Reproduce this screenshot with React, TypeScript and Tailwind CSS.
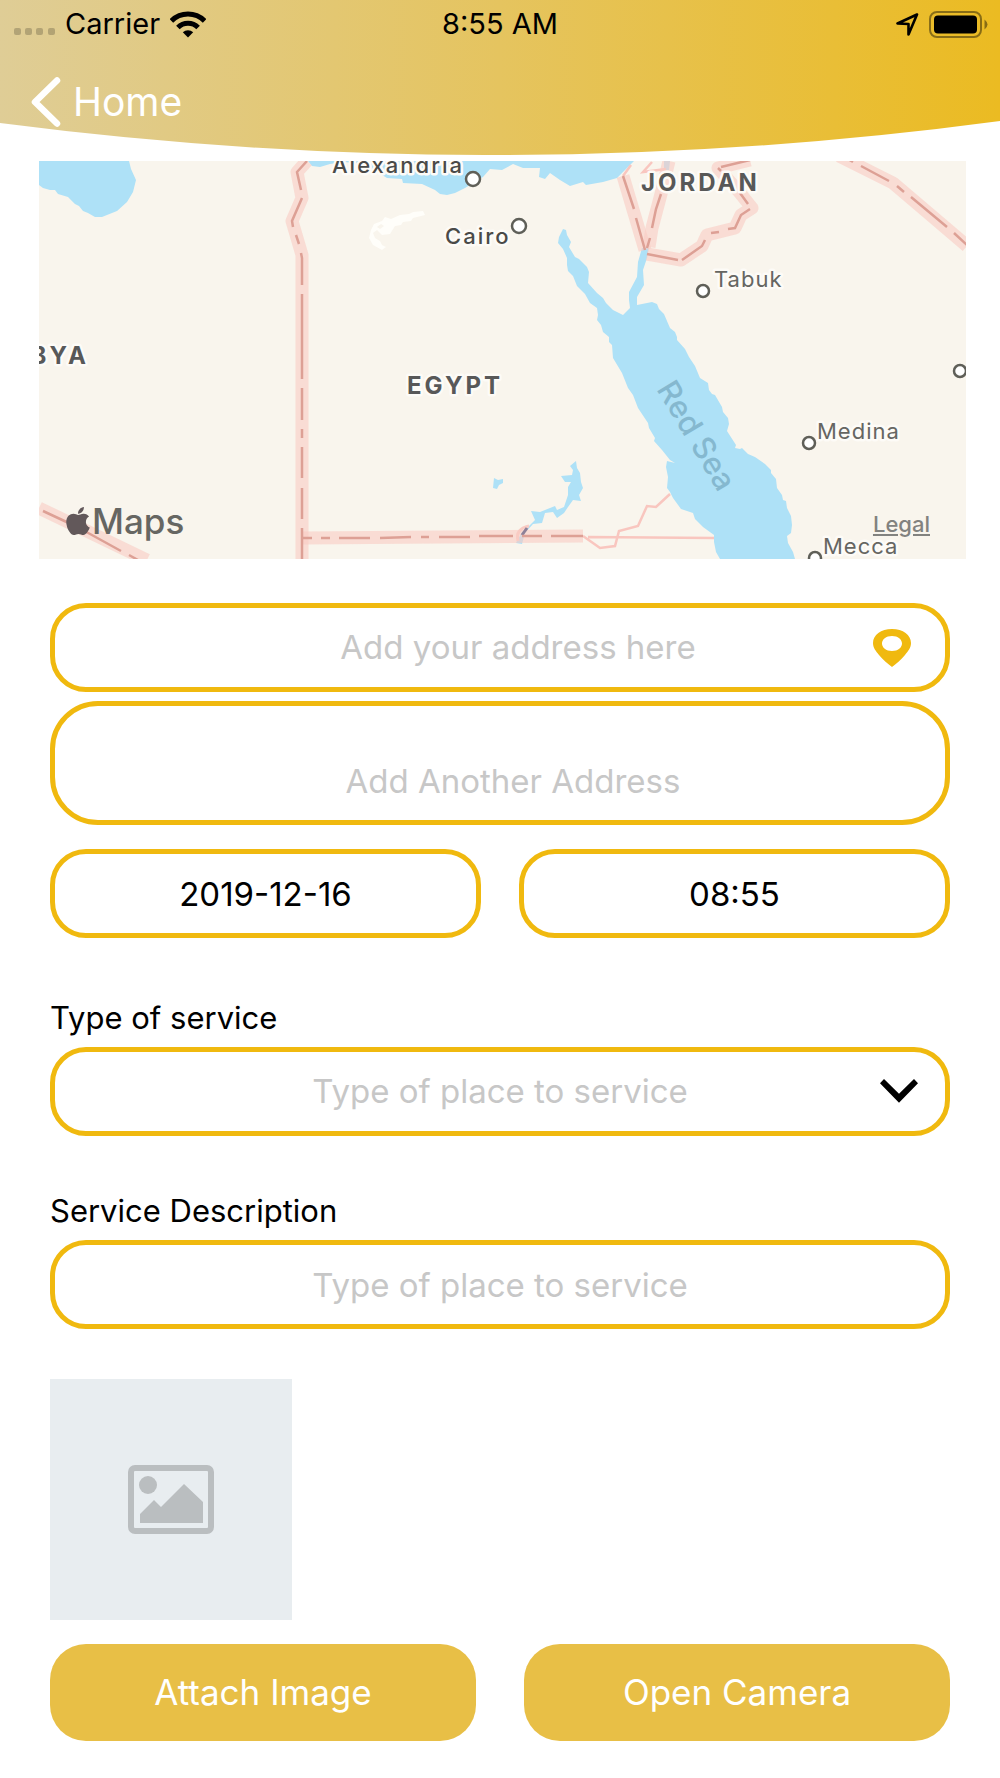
import { useState } from 'react';
import { FaApple } from 'react-icons/fa';

const waters = [
  'M0 0H90L92 8 97 19 94 31 88 41 78 50 63 56H56L49 52 44 50 40 45 36 43 29 36 19 33 16 29H11L4 27 0 24Z',
  'M269 0 273 5 281 6 291 3 305 1 325 3 335 9 348 17 363 18 364 22 383 23 396 29 401 33 408 34 416 32 426 27 444 16 451 8 463 9 474 3 484 7 501 7 500 16 506 18 511 12 521 19 531 25 544 21 547 24 564 21 578 17 584 11 595 0Z',
  'M524 68 527 69 528 74 532 81 530 86 536 96 540 98 548 106 550 111 549 122 558 132 564 137 567 142 574 149 584 154 587 151 591 147 590 139V131L598 116 599 101 603 87H610L608 97 604 109 605 124 598 136V144L613 141 618 143 620 148 625 153 631 167 636 171 638 176V179L646 188 650 196 656 205 661 217 669 222 670 229 673 233 676 234 683 246 684 251 689 257 690 263 688 270 697 284 696 287 701 288 703 287 709 293 716 296 726 303 732 309V312L737 318 738 327 743 334 744 339 747 340 748 347 752 355 753 364 752 372 748 375 749 382 754 391 756 398H681L677 391 675 381V374L664 366 656 358 654 352 642 348 634 337 631 331 628 327 629 316 627 306 628 300 636 302 631 299 623 289 615 280 616 277 610 267 609 262 599 247 594 234 589 227 583 212 574 197 573 184 570 181V176L564 171 562 164 558 159 559 154 558 147 551 142 546 133 538 125 534 115 529 110 528 104V97L524 88 519 82 520 76Z',
  'M537 300 538 307 541 312 542 321 544 327 540 334 542 340 534 339 529 346 525 352 518 357 514 351 506 352 503 362 494 363 486 372 483 383 477 382 483 371 490 365 496 359 492 350 501 351 516 345 518 349 525 346 529 334V326L532 321 526 321 522 315 533 314 534 309 531 305Z',
  'M455 317 459 319 464 318V322L460 324 458 328 454 327Z',
  'M625 0H631L630 9H625Z',
];

const borderBands = [
  'M268 0 258 11 263 37 253 60 263 94V398',
  'M263 377 544 375',
  'M0 347 108 399',
  'M584 15 606 89',
  'M610 86 613 67 622 33 630 0',
  'M608 93 642 99 663 85 668 74 696 67 702 54 713 47 701 32 679 7 711-1',
  'M800-5 854 22 894 56 928 85',
];

const borderDashes = [
  'M268 0 258 11 262 29M263 37 253 60 254 66M257 74 260 83M262 92 263 97V124M263 133V218M263 227V259M263 268V277M263 286V317M263 327V358M263 367V398',
  'M263 377H273M282 377H291M300 377H331M341 377 372 376M382 376H390M400 376H431M440 375H474M483 375H503M512 375H544',
  'M4 350 34 364M42 368 82 390M90 394 99 399',
  'M584 15 595 48M597 57 606 89',
  'M608 87 611 77M613 67 617 48 622 33',
  'M608 93 639 99M643 99 663 85 666 79M672 72 680 71M689 68 696 67 702 54 711 48M709 43 701 32M679 7 682 10M682 6 711-1',
  'M809-2 814 1M822 5 850 20M858 25 865 31M872 36 908 66M915 72 928 84',
];

const cities = [
  { name: 'Alexandria', x: 293, y: 12, cx: 434, cy: 18, r: 7, major: true },
  { name: 'Cairo', x: 406, y: 83, cx: 480, cy: 65, r: 7, major: true },
  { name: 'Tabuk', x: 675, y: 126, cx: 664, cy: 130, r: 6, major: false },
  { name: 'Medina', x: 778, y: 278, cx: 770, cy: 282, r: 6, major: false },
  { name: 'Mecca', x: 784, y: 393, cx: 776, cy: 397, r: 6, major: false },
  { name: '', x: 0, y: 0, cx: 921, cy: 210, r: 6, major: false },
];

const fieldBox = 'h-[89px] w-full rounded-[36px] border-5 border-[#f0b90f] bg-white text-center text-[33px] text-black outline-none placeholder:text-[#c7c7c7]';

function StatusBar() {
  return (
    <div className="grid h-12 grid-cols-3 items-center px-3 text-[29px] text-black">
      <div className="flex items-center gap-2.5">
        <svg viewBox="0 0 43 8" className="mt-4 h-2 w-[43px] fill-black/20">
          <rect x="2" width="7" height="7" rx="2" />
          <rect x="13" width="7" height="7" rx="2" />
          <rect x="24" width="7" height="7" rx="2" />
          <rect x="36" width="7" height="7" rx="2" />
        </svg>
        <span>Carrier</span>
        <svg viewBox="0 0 36 27" className="h-[27px] w-9" fill="none" stroke="#000" strokeWidth="5">
          <path d="M1.4 9.9a23.5 23.5 0 0 1 33.2 0M7.9 16.4a14.3 14.3 0 0 1 20.2 0" />
          <path d="M12.8 21.2a7.8 7.8 0 0 1 10.4 0L18 26.5Z" fill="#000" stroke="none" />
        </svg>
      </div>
      <span className="text-center">8:55 AM</span>
      <div className="flex items-center justify-end gap-2.5">
        <svg viewBox="0 0 23 23" className="h-[23px] w-[23px]" fill="none" stroke="#000" strokeWidth="2.6" strokeLinejoin="round">
          <path d="M21 1.5 1.5 10.5 12.5 11V21.5Z" />
        </svg>
        <svg viewBox="0 0 59 27" className="h-[27px] w-[59px]">
          <rect x="1" y="1" width="51" height="25" rx="7" fill="none" stroke="#000" strokeOpacity=".42" strokeWidth="2" />
          <rect x="5" y="4.5" width="43" height="18" rx="4" />
          <path d="M55.500 8.500q6 5 0 10Z" fillOpacity=".42" />
        </svg>
      </div>
    </div>
  );
}

function Header() {
  return (
    <header className="relative h-[155px]">
      <svg viewBox="0 0 1000 155" preserveAspectRatio="none" className="absolute inset-0 h-full w-full">
        <defs>
          <linearGradient id="gold">
            <stop offset="0" stopColor="#dfcd96" />
            <stop offset=".5" stopColor="#e5c45f" />
            <stop offset="1" stopColor="#ebbb22" />
          </linearGradient>
        </defs>
        <path d="M0 0H1000V121Q500 188 0 123Z" fill="url(#gold)" />
      </svg>
      <div className="relative">
        <StatusBar />
        <a href="#home" className="mt-7 ml-[31px] inline-flex items-center gap-3 text-[39px] leading-[52px] text-white">
          <svg viewBox="0 0 30 50" className="h-[50px] w-[30px]" fill="none" stroke="#fff" strokeWidth="6.500" strokeLinecap="round" strokeLinejoin="round">
            <path d="M26 3.500 4 25 26 46.500" />
          </svg>
          Home
        </a>
      </div>
    </header>
  );
}

function MapView() {
  return (
    <section aria-label="Map" className="relative mt-1.5 mr-[34px] ml-[39px] h-[398px] overflow-hidden bg-[#f9f5ed]">
      <svg viewBox="0 0 927 398" preserveAspectRatio="xMidYMid slice" className="h-full w-full">
        <path d="M330 77 332 69 335 63 343 60 346 56 352 58 361 54 370 53 374 51 384 50 386 54 374 57 372 60 364 61 362 64 356 65 351 73 343 74 338 69 334 72 336 77 341 80 343 84 347 86 343 89 334 84ZM338 66 341 68 345 65 342 63Z" fill="#fffefa" fillRule="evenodd" />
        {waters.map((d) => <path key={d} d={d} fill="#aee1f7" />)}
        <g fill="none" stroke="#f9c6bf" strokeWidth="2.500">
          <path d="M544 375 561 387 576 385 580 370 599 365 608 345 617 346 631 333M549 376 675 377" />
          <path d="M584 15 592 4M613 1 604 11 627 8" />
        </g>
        <g fill="none" stroke="#f9cbc3" strokeOpacity=".6" strokeWidth="13" strokeLinejoin="round">
          {borderBands.map((d) => <path key={d} d={d} />)}
        </g>
        <path d="M490 365Q476 368 479 380" fill="none" stroke="#f9cbc3" strokeWidth="3" />
        <path d="M488 367 483 374" stroke="#8e8098" strokeWidth="3" />
        <g fill="none" stroke="#dda095" strokeWidth="2.500">
          {borderDashes.map((d) => <path key={d} d={d} />)}
        </g>
        <g stroke="#fdfbf7" strokeWidth="5" strokeLinejoin="round" className="[paint-order:stroke]">
          <g fill="#585858" className="text-[24px] font-bold tracking-[3px]">
            <text x="368" y="233">EGYPT</text>
            <text x="602" y="30">JORDAN</text>
            <text x="50" y="203" textAnchor="end">LIBYA</text>
          </g>
          {cities.map((c) => (
            <text key={c.name} x={c.x} y={c.y} className={c.major ? 'fill-[#4a4a48] text-[22px] font-medium tracking-[2px]' : 'fill-[#666662] text-[22px] tracking-[1px]'}>
              {c.name}
            </text>
          ))}
        </g>
        {cities.map((c) => <circle key={c.cx} cx={c.cx} cy={c.cy} r={c.r} fill="#fff" stroke="#5f5f58" strokeWidth="2.500" />)}
        <text transform="translate(617 228) rotate(59)" fill="#85b8cf" className="text-[31px] font-medium">Red Sea</text>
      </svg>
      <div className="absolute bottom-4 left-[25px] flex items-center text-[35px] leading-[44px] font-medium text-[#666662]">
        <FaApple className="h-[32px] w-[28px] text-[#62585a]" />
        Maps
      </div>
      <a href="#legal" className="absolute right-9 bottom-5 text-[22px] leading-[30px] font-medium text-[#82827f] underline">Legal</a>
    </section>
  );
}

export default function App() {
  const [address, setAddress] = useState('');
  const [otherAddress, setOtherAddress] = useState('');
  const [date, setDate] = useState('2019-12-16');
  const [time, setTime] = useState('08:55');
  const [service, setService] = useState('');
  const [description, setDescription] = useState('');

  return (
    <div className="min-h-screen bg-white font-['Inter',sans-serif]">
      <Header />
      <main>
        <MapView />
        <form className="flex flex-col px-[50px] pt-11 pb-9" onSubmit={(e) => e.preventDefault()}>
          {/* Addresses */}
          <div className="flex h-[89px] items-center rounded-[36px] border-5 border-[#f0b90f] pr-[34px] pl-[108px]">
            <input
              aria-label="Address"
              placeholder="Add your address here"
              value={address}
              onChange={(e) => setAddress(e.target.value)}
              className="w-full min-w-0 flex-1 text-center text-[33px] outline-none placeholder:text-[#c7c7c7]"
            />
            <button type="button" aria-label="Use my location">
              <svg viewBox="0 0 38 38" className="h-[38px] w-[38px]">
                <path fillRule="evenodd" fill="#f0b90f" d="M19 38C15 35 10 31 6 26 3 22 0 19 0 14 0 6 8 0 19 0s19 6 19 14c0 5-3 8-6 12-4 5-9 9-13 12ZM19 7C13 7 9 10.500 9 14.500S13 22 19 22s10-3.500 10-7.500S25 7 19 7Z" />
              </svg>
            </button>
          </div>
          <input
            aria-label="Another address"
            placeholder="Add Another Address"
            value={otherAddress}
            onChange={(e) => setOtherAddress(e.target.value)}
            className="mt-[9px] h-[124px] w-full rounded-[48px] border-5 border-[#f0b90f] pt-9 pl-[26px] text-center text-[33px] outline-none placeholder:text-[#c7c7c7]"
          />

          {/* Date and time */}
          <div className="mt-6 grid grid-cols-2 gap-[38px]">
            <input aria-label="Date" value={date} onChange={(e) => setDate(e.target.value)} className={fieldBox} />
            <input aria-label="Time" value={time} onChange={(e) => setTime(e.target.value)} className={fieldBox} />
          </div>

          {/* Service */}
          <label htmlFor="service" className="mt-[60px] text-[31px] leading-10">Type of service</label>
          <div className="relative mt-[9px]">
            <select
              id="service"
              value={service}
              onChange={(e) => setService(e.target.value)}
              className={`${fieldBox} block appearance-none ${service ? '' : 'text-[#c7c7c7]!'}`}
            >
              <option value="">Type of place to service</option>
              <option value="home">Home</option>
              <option value="office">Office</option>
            </select>
            <svg viewBox="0 0 38 24" className="pointer-events-none absolute top-8 right-8 h-6 w-[38px]">
              <path d="M0 4.300 4 0 19 14.700 34 0 38 4.300 19 23.700Z" />
            </svg>
          </div>

          <label htmlFor="description" className="mt-[55px] text-[31px] leading-10">Service Description</label>
          <input
            id="description"
            placeholder="Type of place to service"
            value={description}
            onChange={(e) => setDescription(e.target.value)}
            className={`${fieldBox} mt-[9px]`}
          />

          {/* Attachment preview */}
          <div className="mt-[50px] flex h-[241px] w-[242px] items-center justify-center bg-[#e8edf0]">
            <svg viewBox="0 0 86 69" className="h-[69px] w-[86px]" fill="#babec0">
              <rect x="3" y="3" width="80" height="63" rx="4" fill="none" stroke="#babec0" strokeWidth="6" />
              <circle cx="20" cy="20" r="9" />
              <path d="M12 49 26 35 33 42 56 19 75 37V58H12Z" />
            </svg>
          </div>

          <div className="mt-6 grid grid-cols-2 gap-12 text-[35px] text-white">
            <button type="button" className="h-[97px] rounded-[36px] bg-[#e8bf46]">Attach Image</button>
            <button type="button" className="h-[97px] rounded-[36px] bg-[#e8bf46]">Open Camera</button>
          </div>
        </form>
      </main>
    </div>
  );
}
